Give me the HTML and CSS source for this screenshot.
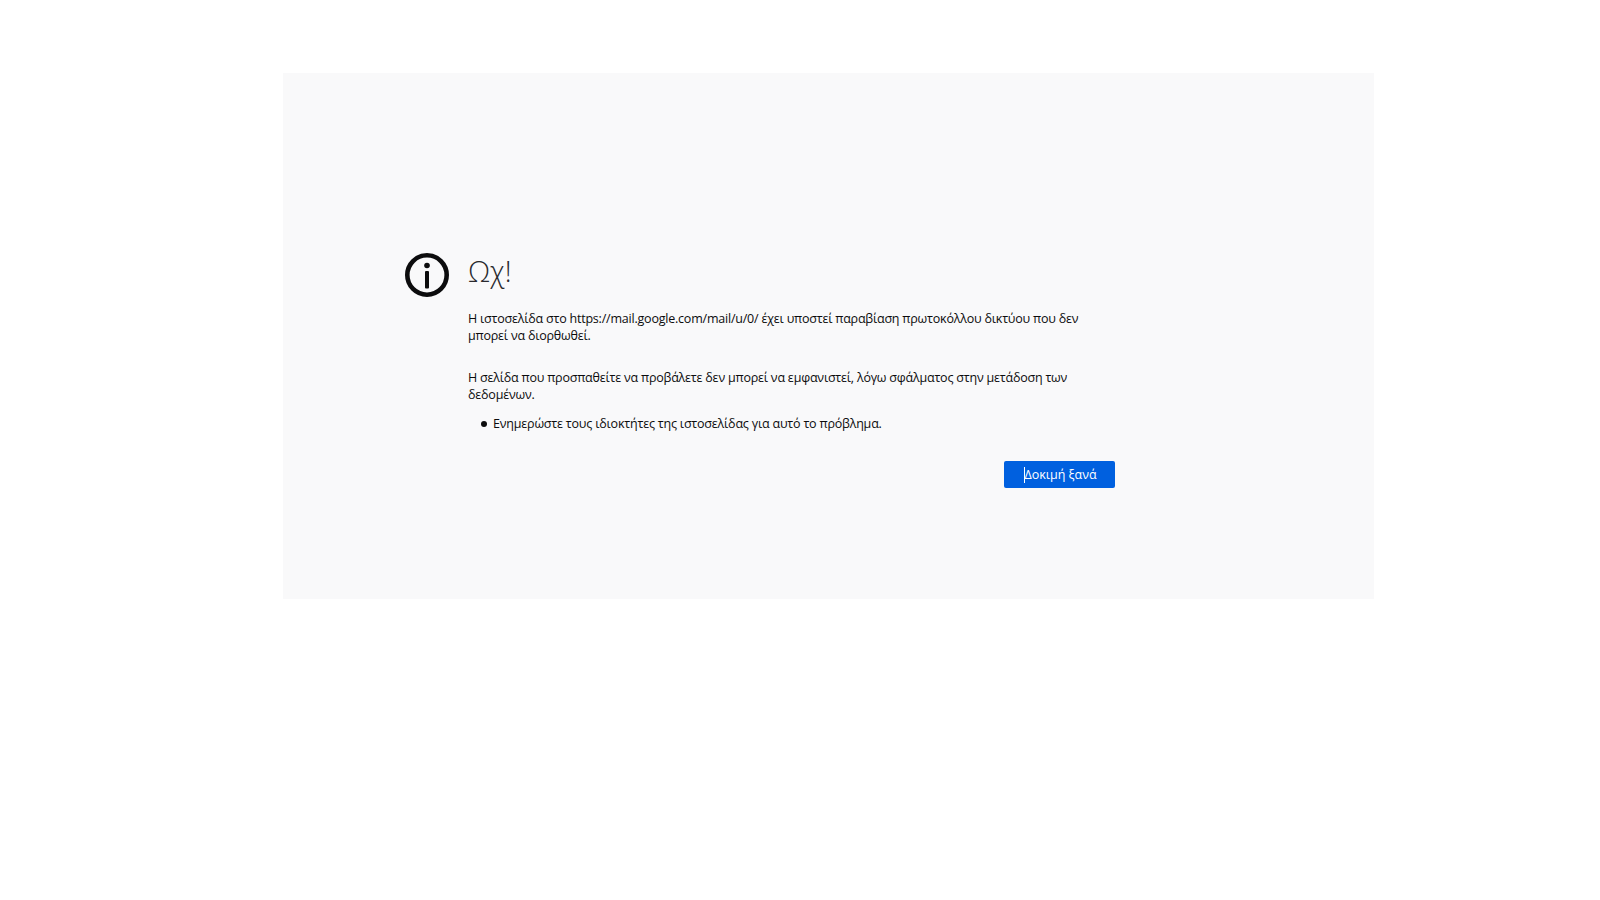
FILE: index.html
```html
<!DOCTYPE html>
<html lang="el">
<head>
<meta charset="utf-8">
<title>Ωχ!</title>
<link rel="stylesheet" href="styles.css">
</head>
<body>
<main class="panel">
  <div class="container">
    <svg class="icon" width="44" height="44" viewBox="0 0 44 44" aria-hidden="true">
      <circle cx="22" cy="22" r="19.7" fill="none" stroke="#0c0c0d" stroke-width="4.6"/>
      <circle cx="22" cy="12.5" r="2.8" fill="#0c0c0d"/>
      <rect x="20" y="18" width="4" height="17.5" rx="1" fill="#0c0c0d"/>
    </svg>
    <div class="content">
      <h1 class="title">Ωχ!</h1>
      <p class="para first">Η ιστοσελίδα στο https://mail.google.com/mail/u/0/ έχει υποστεί παραβίαση πρωτοκόλλου δικτύου που δεν μπορεί να διορθωθεί.</p>
      <p class="para second">Η σελίδα που προσπαθείτε να προβάλετε δεν μπορεί να εμφανιστεί, λόγω σφάλματος στην μετάδοση των δεδομένων.</p>
      <ul class="list">
        <li class="item">Ενημερώστε τους ιδιοκτήτες της ιστοσελίδας για αυτό το πρόβλημα.</li>
      </ul>
      <div class="actions">
        <button class="retry" type="button"><span class="caret"></span>Δοκιμή ξανά</button>
      </div>
    </div>
  </div>
</main>
</body>
</html>
```
FILE: styles.css
```css
* { box-sizing: border-box; }
html, body { margin: 0; background: #fff; }
body { height: 900px; overflow: hidden; font-family: "Open Sans", "Noto Sans", sans-serif; color: #0c0c0d; }
.panel {
  width: 1091px;
  height: 526px;
  margin: 73px 0 0 283px;
  padding: 180px 0 0 122px;
  background: #f9f9fa;
}
.container { display: flex; width: 710px; }
.icon { flex: none; margin: 0 19px 0 0; }
.content { flex: 1; min-width: 0; }
.title {
  margin: -1px 0 0;
  font-size: 28.5px;
  font-weight: 300;
  line-height: 38px;
  color: #2a2a2e;
}
.para { margin: 0; font-size: 12.5px; letter-spacing: -0.21px; line-height: 17px; width: 618px; }
.first { margin-top: 20px; }
.second { margin-top: 25px; }
.list { list-style: none; margin: 12px 0 0; padding: 0 0 0 13px; font-size: 12.5px; letter-spacing: -0.2px; line-height: 17px; }
.item { display: flex; align-items: center; gap: 6px; }
.item::before { content: ""; flex: none; width: 6px; height: 6px; border-radius: 50%; background: #0c0c0d; }
.actions { display: flex; justify-content: flex-end; margin-top: 29px; }
.retry {
  position: relative;
  width: 111px;
  height: 27px;
  padding: 0 0 1px 2px;
  border: 0;
  border-radius: 2px;
  background: #0060df;
  color: #fff;
  font: 12.5px "Open Sans", "Noto Sans", sans-serif;
}
.caret { position: absolute; left: 20px; top: 6px; width: 1px; height: 16px; background: #fff; }
```
